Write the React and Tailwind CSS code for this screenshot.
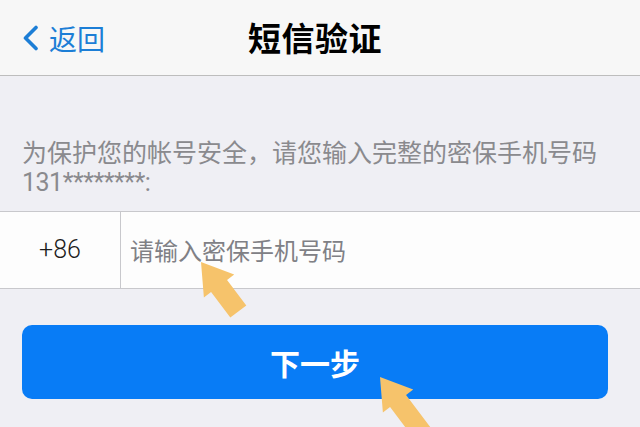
const font = { fontFamily: '"Noto Sans CJK SC", "Noto Sans", sans-serif' };

// thick pointer arrow, tip at (x, y), rotated around the tip
function Pointer({ x, y, angle, length }) {
  const pts = `0,0 19,30 10,30 10,${length} -10,${length} -10,30 -19,30`;
  return (
    <polygon
      points={pts}
      fill="#f6c36b"
      transform={`translate(${x} ${y}) rotate(${angle})`}
    />
  );
}

export default function App() {
  return (
    <div
      className="relative w-[640px] h-[427px] overflow-hidden bg-[#efeff4]"
      style={font}
    >
      {/* Nav bar */}
      <div className="h-[76px] bg-[#f7f7f7] border-b border-[#bdbdbd] flex items-center pl-[22px]">
        <div className="w-[226px] flex items-center gap-[10px] text-[#1c7ed6]">
          <svg width="17" height="26" viewBox="0 0 17 26" fill="none">
            <polyline
              points="14,2.5 3.5,13 14,23.5"
              stroke="#1c7ed6"
              strokeWidth="3.6"
              strokeLinecap="round"
              strokeLinejoin="round"
            />
          </svg>
          <span className="text-[28px] leading-none">返回</span>
        </div>
        <h1 className="text-[33px] font-bold text-black leading-none tracking-[0.5px]">
          短信验证
        </h1>
      </div>

      {/* Hint */}
      <div className="pt-[60px] px-[22px] text-[25px] leading-[31px] text-[#8a8a8e]">
        <p>为保护您的帐号安全，请您输入完整的密保手机号码</p>
        <p className="font-['Roboto'] tracking-[-0.5px]">131********:</p>
      </div>

      {/* Phone input */}
      <div className="mt-[13px] h-[78px] bg-[#fdfdfd] border-y border-[#c8c8cc] flex">
        <div className="w-[121px] border-r border-[#c8c8cc] flex items-center justify-center text-[25px] text-[#1d1d1d] font-['Roboto'] font-light">
          +86
        </div>
        <div className="flex-1 flex items-center pl-[9px] text-[24px] text-[#808085]">
          请输入密保手机号码
        </div>
      </div>

      {/* Next */}
      <div className="px-[22px] pt-[36px]">
        <button className="w-[586px] h-[74px] rounded-[10px] bg-[#087cf6] text-white text-[30px] font-bold leading-none">
          下一步
        </button>
      </div>

      {/* Hint arrows */}
      <svg
        className="absolute inset-0 pointer-events-none"
        width="640"
        height="427"
        viewBox="0 0 640 427"
      >
        <Pointer x={201} y={262} angle={-37} length={62} />
        <Pointer x={380} y={377} angle={-37} length={90} />
      </svg>
    </div>
  );
}
